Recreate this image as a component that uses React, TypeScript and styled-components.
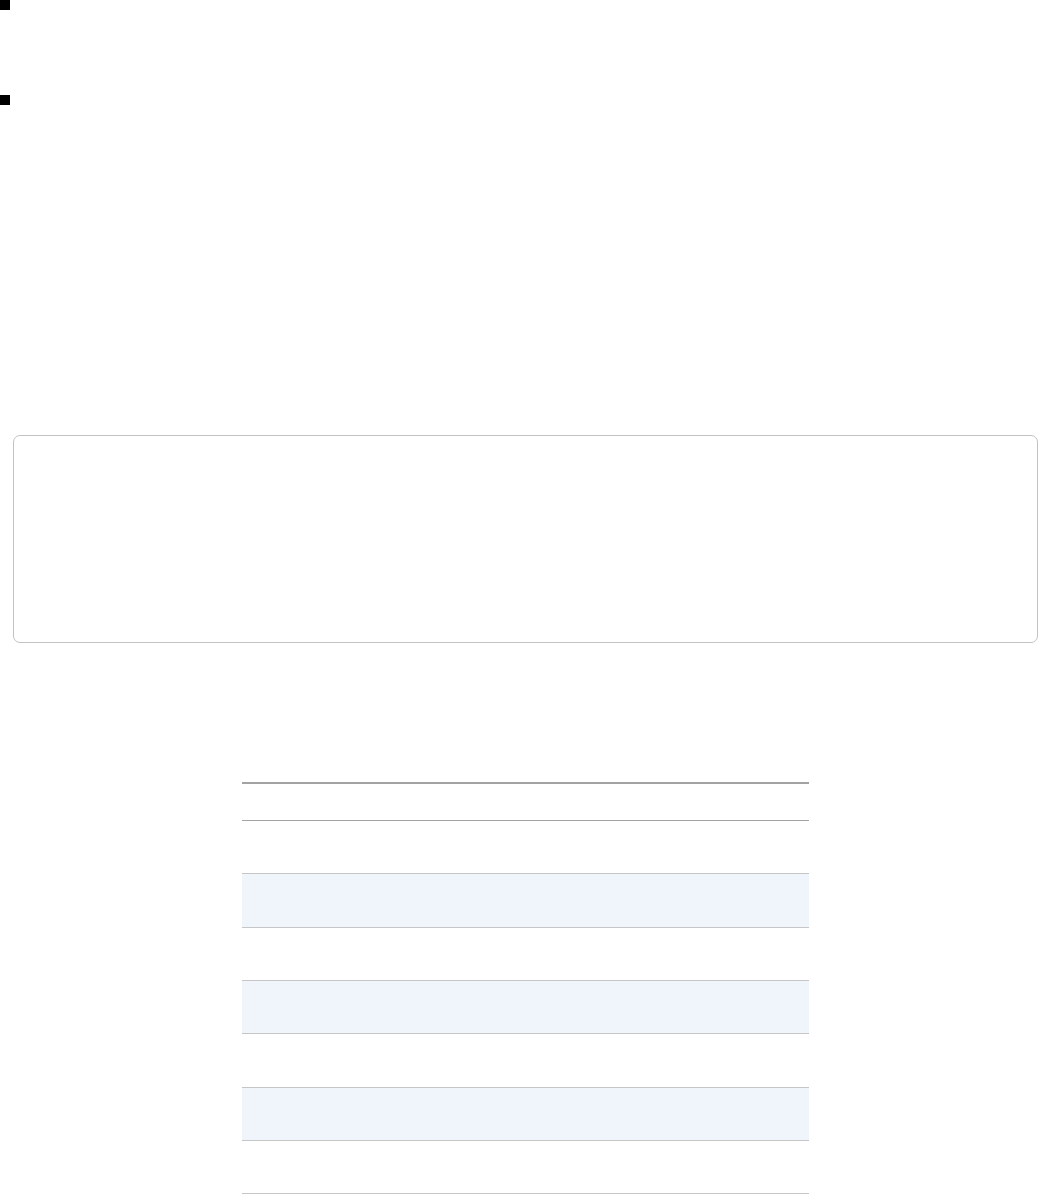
import React from 'react';
import styled, { createGlobalStyle } from 'styled-components';

const GlobalStyle = createGlobalStyle`
  html, body {
    margin: 0;
    padding: 0;
    background: #ffffff;
    font-family: "Liberation Sans", Arial, sans-serif;
  }
`;

const Page = styled.div`
  display: flex;
  flex-direction: column;
  width: 1039px;
`;

const Bullets = styled.div`
  display: flex;
  flex-direction: column;
  gap: 85px;
`;

const Bullet = styled.div`
  width: 10px;
  height: 10px;
  background: #000000;
`;

const Panel = styled.div`
  box-sizing: border-box;
  margin-top: 330px;
  margin-left: 13px;
  width: 1025px;
  height: 208px;
  border: 1.5px solid #c2c2c2;
  border-radius: 7px;
  background: #ffffff;
`;

const Table = styled.div`
  display: flex;
  flex-direction: column;
  margin-top: 139px;
  margin-left: 242px;
  width: 567px;
`;

const HeadRow = styled.div`
  box-sizing: border-box;
  height: 39px;
  border-top: 2px solid #a3a3a3;
  border-bottom: 1.5px solid #a3a3a3;
`;

const Row = styled.div<{ $striped: boolean }>`
  box-sizing: border-box;
  height: 53.33px;
  border-bottom: 1.5px solid #c6c6c6;
  background: ${(p) => (p.$striped ? '#f0f4fb' : '#ffffff')};
`;

const rows = [0, 1, 2, 3, 4, 5, 6];

export default function App() {
  return (
    <Page>
      <GlobalStyle />
      <Bullets>
        <Bullet />
        <Bullet />
      </Bullets>
      <Panel />
      <Table>
        <HeadRow />
        {rows.map((i) => (
          <Row key={i} $striped={i % 2 === 1} />
        ))}
      </Table>
    </Page>
  );
}
